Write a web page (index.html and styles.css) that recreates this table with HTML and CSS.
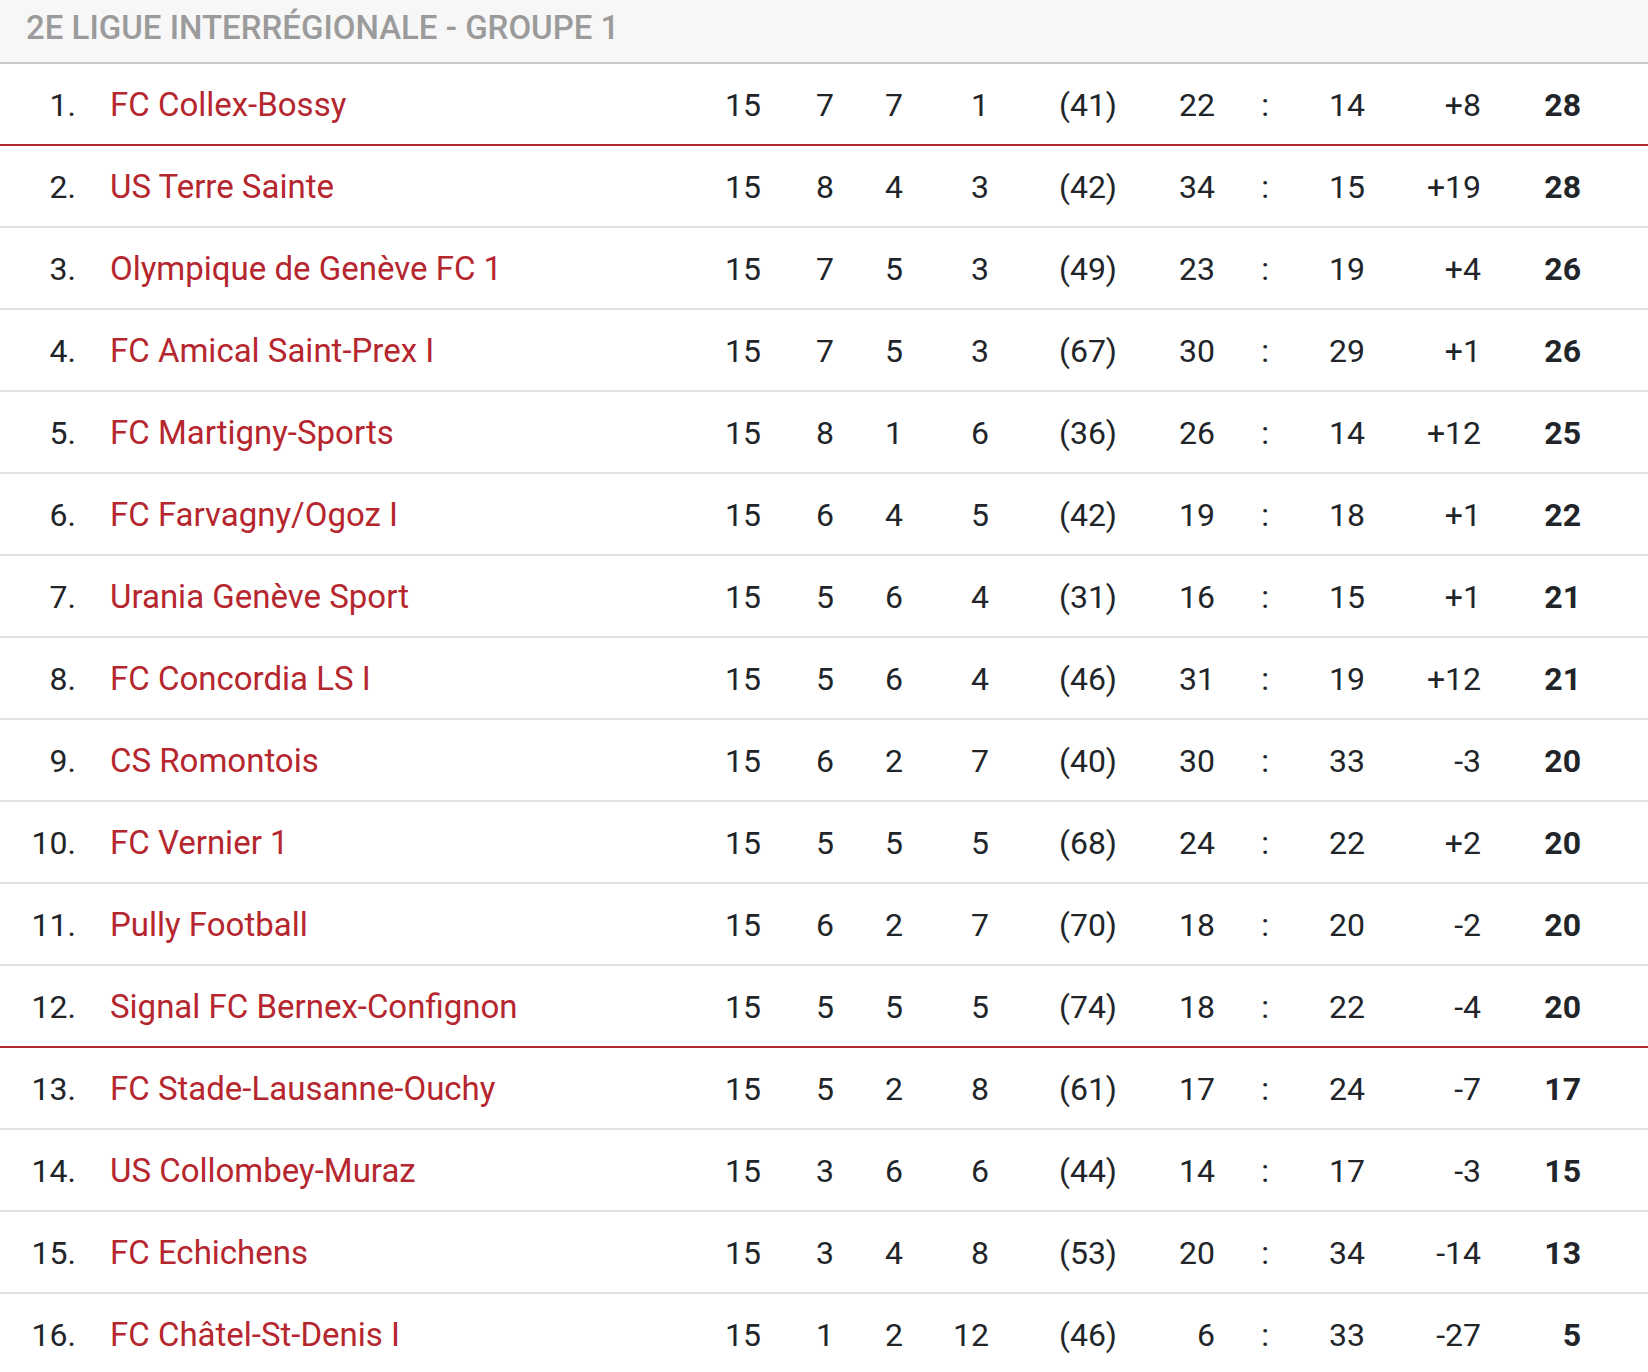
FILE: index.html
```html
<!DOCTYPE html>
<html lang="fr">
<head>
<meta charset="utf-8">
<title>2E LIGUE INTERRÉGIONALE - GROUPE 1</title>
<link rel="stylesheet" href="styles.css">
</head>
<body>
<div class="standings">
  <div class="group-title">2E LIGUE INTERRÉGIONALE - GROUPE 1</div>
  <div class="rows">
    <div class="row promo"><span class="rank">1.</span><a class="team">FC Collex-Bossy</a><span class="num">15</span><span class="num">7</span><span class="num">7</span><span class="num">1</span><span class="num">(41)</span><span class="num">22</span><span class="colon">:</span><span class="num">14</span><span class="num">+8</span><span class="num pts">28</span></div>
    <div class="row"><span class="rank">2.</span><a class="team">US Terre Sainte</a><span class="num">15</span><span class="num">8</span><span class="num">4</span><span class="num">3</span><span class="num">(42)</span><span class="num">34</span><span class="colon">:</span><span class="num">15</span><span class="num">+19</span><span class="num pts">28</span></div>
    <div class="row"><span class="rank">3.</span><a class="team">Olympique de Genève FC 1</a><span class="num">15</span><span class="num">7</span><span class="num">5</span><span class="num">3</span><span class="num">(49)</span><span class="num">23</span><span class="colon">:</span><span class="num">19</span><span class="num">+4</span><span class="num pts">26</span></div>
    <div class="row"><span class="rank">4.</span><a class="team">FC Amical Saint-Prex I</a><span class="num">15</span><span class="num">7</span><span class="num">5</span><span class="num">3</span><span class="num">(67)</span><span class="num">30</span><span class="colon">:</span><span class="num">29</span><span class="num">+1</span><span class="num pts">26</span></div>
    <div class="row"><span class="rank">5.</span><a class="team">FC Martigny-Sports</a><span class="num">15</span><span class="num">8</span><span class="num">1</span><span class="num">6</span><span class="num">(36)</span><span class="num">26</span><span class="colon">:</span><span class="num">14</span><span class="num">+12</span><span class="num pts">25</span></div>
    <div class="row"><span class="rank">6.</span><a class="team">FC Farvagny/Ogoz I</a><span class="num">15</span><span class="num">6</span><span class="num">4</span><span class="num">5</span><span class="num">(42)</span><span class="num">19</span><span class="colon">:</span><span class="num">18</span><span class="num">+1</span><span class="num pts">22</span></div>
    <div class="row"><span class="rank">7.</span><a class="team">Urania Genève Sport</a><span class="num">15</span><span class="num">5</span><span class="num">6</span><span class="num">4</span><span class="num">(31)</span><span class="num">16</span><span class="colon">:</span><span class="num">15</span><span class="num">+1</span><span class="num pts">21</span></div>
    <div class="row"><span class="rank">8.</span><a class="team">FC Concordia LS I</a><span class="num">15</span><span class="num">5</span><span class="num">6</span><span class="num">4</span><span class="num">(46)</span><span class="num">31</span><span class="colon">:</span><span class="num">19</span><span class="num">+12</span><span class="num pts">21</span></div>
    <div class="row"><span class="rank">9.</span><a class="team">CS Romontois</a><span class="num">15</span><span class="num">6</span><span class="num">2</span><span class="num">7</span><span class="num">(40)</span><span class="num">30</span><span class="colon">:</span><span class="num">33</span><span class="num">-3</span><span class="num pts">20</span></div>
    <div class="row"><span class="rank">10.</span><a class="team">FC Vernier 1</a><span class="num">15</span><span class="num">5</span><span class="num">5</span><span class="num">5</span><span class="num">(68)</span><span class="num">24</span><span class="colon">:</span><span class="num">22</span><span class="num">+2</span><span class="num pts">20</span></div>
    <div class="row"><span class="rank">11.</span><a class="team">Pully Football</a><span class="num">15</span><span class="num">6</span><span class="num">2</span><span class="num">7</span><span class="num">(70)</span><span class="num">18</span><span class="colon">:</span><span class="num">20</span><span class="num">-2</span><span class="num pts">20</span></div>
    <div class="row releg"><span class="rank">12.</span><a class="team">Signal FC Bernex-Confignon</a><span class="num">15</span><span class="num">5</span><span class="num">5</span><span class="num">5</span><span class="num">(74)</span><span class="num">18</span><span class="colon">:</span><span class="num">22</span><span class="num">-4</span><span class="num pts">20</span></div>
    <div class="row"><span class="rank">13.</span><a class="team">FC Stade-Lausanne-Ouchy</a><span class="num">15</span><span class="num">5</span><span class="num">2</span><span class="num">8</span><span class="num">(61)</span><span class="num">17</span><span class="colon">:</span><span class="num">24</span><span class="num">-7</span><span class="num pts">17</span></div>
    <div class="row"><span class="rank">14.</span><a class="team">US Collombey-Muraz</a><span class="num">15</span><span class="num">3</span><span class="num">6</span><span class="num">6</span><span class="num">(44)</span><span class="num">14</span><span class="colon">:</span><span class="num">17</span><span class="num">-3</span><span class="num pts">15</span></div>
    <div class="row"><span class="rank">15.</span><a class="team">FC Echichens</a><span class="num">15</span><span class="num">3</span><span class="num">4</span><span class="num">8</span><span class="num">(53)</span><span class="num">20</span><span class="colon">:</span><span class="num">34</span><span class="num">-14</span><span class="num pts">13</span></div>
    <div class="row"><span class="rank">16.</span><a class="team">FC Châtel-St-Denis I</a><span class="num">15</span><span class="num">1</span><span class="num">2</span><span class="num">12</span><span class="num">(46)</span><span class="num">6</span><span class="colon">:</span><span class="num">33</span><span class="num">-27</span><span class="num pts">5</span></div>
  </div>
</div>
</body>
</html>
```

FILE: styles.css
```css
html, body {
  margin: 0;
  padding: 0;
  background: #ffffff;
}

body {
  font-family: Roboto, "Liberation Sans", Arial, sans-serif;
  color: #212529;
}

.standings {
  width: 1648px;
}

.group-title {
  height: 64px;
  box-sizing: border-box;
  padding: 8px 0 0 26px;
  background: #f7f7f7;
  border-bottom: 2px solid #cacaca;
  color: #9b9b9b;
  font-size: 33px;
  font-weight: 500;
  line-height: 40px;
  white-space: nowrap;
}

.row {
  display: grid;
  grid-template-columns: 76px 624px 61px 73px 69px 86px 128px 98px 100px 50px 116px 100px 1fr;
  height: 82px;
  box-sizing: border-box;
  border-bottom: 2px solid #dee2e6;
  font-size: 32px;
  line-height: 80px;
  padding-top: 1px;
}

.row.promo,
.row.releg {
  border-bottom-color: #b5262e;
}

.rank {
  text-align: right;
  white-space: nowrap;
}

.team {
  padding-left: 34px;
  color: #b5262e;
  font-size: 33px;
  text-decoration: none;
  white-space: nowrap;
}

.num {
  text-align: right;
  white-space: nowrap;
}

.colon {
  text-align: center;
}

.pts {
  font-weight: 700;
}
```
